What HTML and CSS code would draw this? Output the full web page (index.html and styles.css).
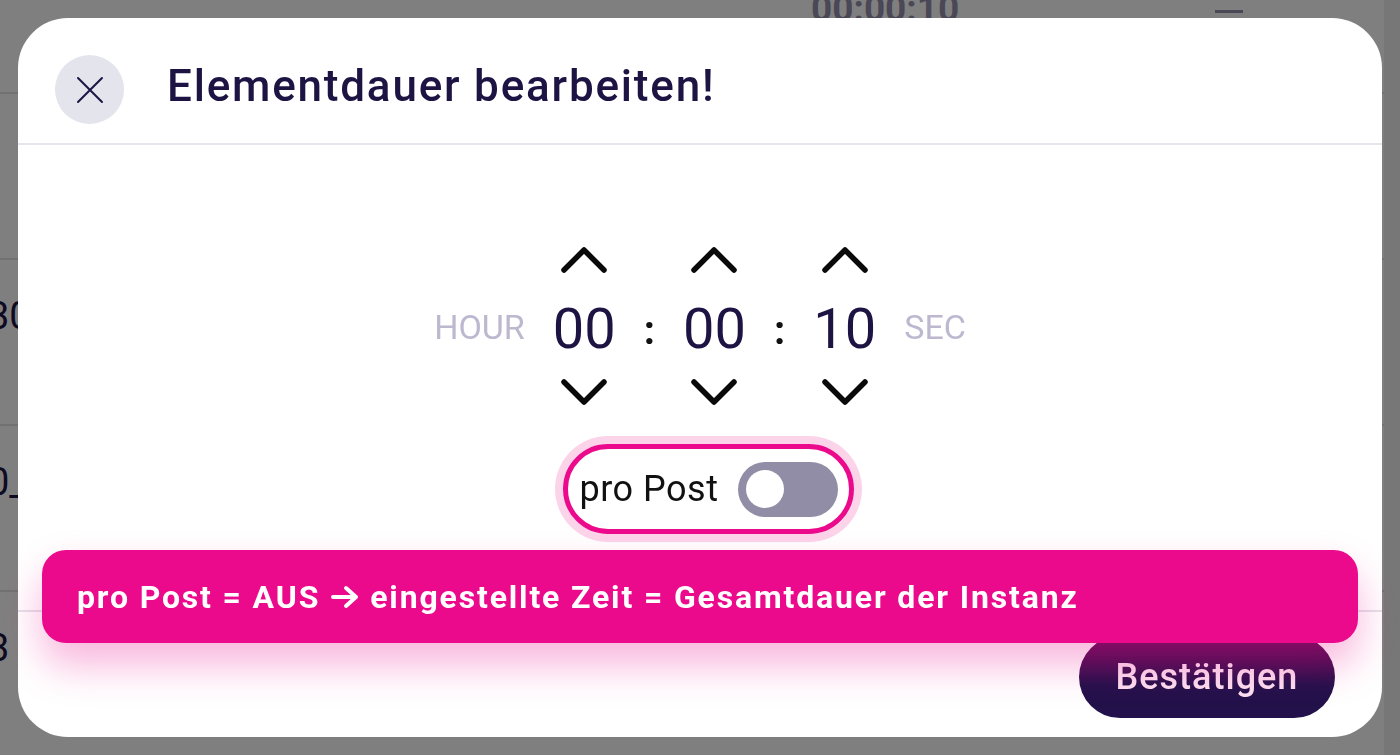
FILE: index.html
```html
<!DOCTYPE html>
<html lang="de">
<head>
    <meta charset="UTF-8">
    <meta name="viewport" content="width=device-width, initial-scale=1.0">
    <title>Elementdauer bearbeiten</title>
    <link rel="stylesheet" href="styles.css">
</head>
<body>
    <!-- page behind the dialog -->
    <div class="screen">
        <div class="list">
            <div class="list-row list-row-first">
                <span class="row-time">00:00:10</span>
                <span class="row-dash"></span>
            </div>
            <div class="list-row"></div>
            <div class="list-row"><span class="row-name">30</span></div>
            <div class="list-row"><span class="row-name">0_</span></div>
            <div class="list-row list-row-last"><span class="row-name">3</span></div>
        </div>
        <div class="scroll-track"></div>
    </div>

    <div class="backdrop"></div>

    <div class="modal">
        <div class="modal-header">
            <button class="close-btn" aria-label="Schließen">
                <svg width="30" height="30" viewBox="0 0 30 30">
                    <path d="M3 3 L27 27 M27 3 L3 27" stroke="#1e1443" stroke-width="2" stroke-linecap="round" fill="none"/>
                </svg>
            </button>
            <h2 class="modal-title">Elementdauer bearbeiten!</h2>
        </div>

        <div class="modal-body">
            <div class="time-picker">
                <span class="unit">HOUR</span>
                <div class="spinner">
                    <button class="arrow"><svg width="48" height="28" viewBox="0 0 48 28"><path d="M4 24 L24 4 L44 24" /></svg></button>
                    <span class="digits">00</span>
                    <button class="arrow"><svg width="48" height="28" viewBox="0 0 48 28"><path d="M4 4 L24 24 L44 4" /></svg></button>
                </div>
                <span class="colon">:</span>
                <div class="spinner">
                    <button class="arrow"><svg width="48" height="28" viewBox="0 0 48 28"><path d="M4 24 L24 4 L44 24" /></svg></button>
                    <span class="digits">00</span>
                    <button class="arrow"><svg width="48" height="28" viewBox="0 0 48 28"><path d="M4 4 L24 24 L44 4" /></svg></button>
                </div>
                <span class="colon">:</span>
                <div class="spinner">
                    <button class="arrow"><svg width="48" height="28" viewBox="0 0 48 28"><path d="M4 24 L24 4 L44 24" /></svg></button>
                    <span class="digits">10</span>
                    <button class="arrow"><svg width="48" height="28" viewBox="0 0 48 28"><path d="M4 4 L24 24 L44 4" /></svg></button>
                </div>
                <span class="unit">SEC</span>
            </div>

            <label class="post-toggle">
                <span class="post-label">pro Post</span>
                <span class="switch"><span class="knob"></span></span>
            </label>
        </div>

        <div class="modal-footer">
            <button class="confirm-btn">Bestätigen</button>
        </div>
    </div>

    <div class="toast">
        <span>pro Post = AUS</span>
        <svg class="toast-arrow" width="30" height="24" viewBox="0 0 30 24"><path d="M3 12 H26 M16 3 L26 12 L16 21" /></svg>
        <span>eingestellte Zeit = Gesamtdauer der Instanz</span>
    </div>
</body>
</html>
```

FILE: styles.css
```css
* {
    box-sizing: border-box;
    padding: 0;
    margin: 0;
    font-family: 'Roboto', 'Noto Sans', sans-serif;
}
body {
    width: 1400px;
    height: 755px;
    overflow: hidden;
    background: #ffffff;
}
button {
    border: none;
    background: none;
    cursor: pointer;
}

/* page behind */
.screen {
    display: flex;
    height: 100%;
}
.list {
    flex: 1;
    display: flex;
    flex-direction: column;
}
.list-row {
    height: 166px;
    border-bottom: 2px solid #e2e2e2;
    display: flex;
    align-items: flex-start;
    padding-top: 34px;
    flex-shrink: 0;
}
.list-row-first {
    height: 94px;
    padding-top: 0;
}
.list-row-last {
    border-bottom: none;
}
.row-name {
    margin-left: -12px;
    font-size: 38px;
    color: #1c1542;
}
.row-time {
    margin-left: 811px;
    margin-top: -13px;
    font-size: 37px;
    font-weight: 700;
    color: #958fad;
}
.row-dash {
    width: 28px;
    height: 3px;
    margin-left: 256px;
    margin-top: 10px;
    background: #958fad;
}
.scroll-track {
    width: 16px;
    background: #eeeeee;
}
.backdrop {
    position: fixed;
    inset: 0;
    background: rgba(0, 0, 0, 0.5);
}

/* dialog */
.modal {
    position: fixed;
    left: 18px;
    top: 18px;
    width: 1364px;
    height: 719px;
    background: #ffffff;
    border-radius: 50px;
    display: flex;
    flex-direction: column;
    overflow: hidden;
}
.modal-header {
    height: 127px;
    display: flex;
    align-items: flex-start;
    gap: 43px;
    padding: 37px 0 0 37px;
    border-bottom: 2px solid #e6e6ec;
}
.close-btn {
    width: 69px;
    height: 69px;
    border-radius: 50%;
    background: #e3e4ec;
    display: flex;
    align-items: center;
    justify-content: center;
}
.modal-title {
    font-size: 44px;
    font-weight: 500;
    letter-spacing: 1.8px;
    line-height: 60px;
    color: #1e1443;
    margin-top: 1px;
}
.modal-body {
    flex: 1;
    display: flex;
    flex-direction: column;
    align-items: center;
    padding-top: 101px;
}
.time-picker {
    display: flex;
    align-items: center;
    gap: 28px;
}
.unit {
    font-size: 34px;
    color: #bdb8cf;
    margin-top: 2px;
}
.spinner {
    display: flex;
    flex-direction: column;
    align-items: center;
    gap: 5px;
}
.arrow {
    display: flex;
}
.arrow svg path {
    fill: none;
    stroke: #0a0a0a;
    stroke-width: 5.5;
    stroke-linecap: round;
    stroke-linejoin: round;
}
.digits {
    font-size: 56px;
    line-height: 88px;
    margin-top: 6px;
    color: #1e1443;
}
.colon {
    font-size: 40px;
    font-weight: 700;
    color: #111111;
    margin-top: 8px;
}
.post-toggle {
    margin-top: 38px;
    margin-left: 17px;
    display: flex;
    align-items: center;
    gap: 20px;
    height: 90px;
    padding: 0 11px 0 12px;
    border: 5px solid #ec0a8c;
    border-radius: 45px;
    box-shadow: 0 0 0 8px #fcd4ea;
}
.post-label {
    font-size: 36px;
    letter-spacing: 0.5px;
    color: #111111;
}
.switch {
    width: 100px;
    height: 55px;
    border-radius: 28px;
    background: #928da6;
    display: flex;
    align-items: center;
    padding-left: 8px;
}
.knob {
    width: 38px;
    height: 38px;
    border-radius: 50%;
    background: #ffffff;
}
.modal-footer {
    height: 127px;
    border-top: 2px solid #e4e2ea;
    display: flex;
    justify-content: flex-end;
    align-items: flex-end;
    padding: 0 47px 19px 0;
}
.confirm-btn {
    width: 256px;
    height: 82px;
    border-radius: 41px;
    background: linear-gradient(to bottom, #6a0c58, #22114a 60%);
    color: #fce0f0;
    font-size: 36px;
    font-weight: 500;
    letter-spacing: 1px;
}

/* hint toast over the dialog */
.toast {
    position: fixed;
    left: 42px;
    top: 550px;
    width: 1316px;
    height: 93px;
    border-radius: 24px;
    background: #ec0a8c;
    color: #ffffff;
    font-size: 32px;
    font-weight: 700;
    letter-spacing: 1.85px;
    display: flex;
    align-items: center;
    gap: 10px;
    padding-left: 35px;
    box-shadow: 0 22px 40px rgba(236, 10, 140, 0.3);
}
.toast-arrow path {
    fill: none;
    stroke: #ffffff;
    stroke-width: 4;
    stroke-linecap: round;
    stroke-linejoin: round;
}
```
